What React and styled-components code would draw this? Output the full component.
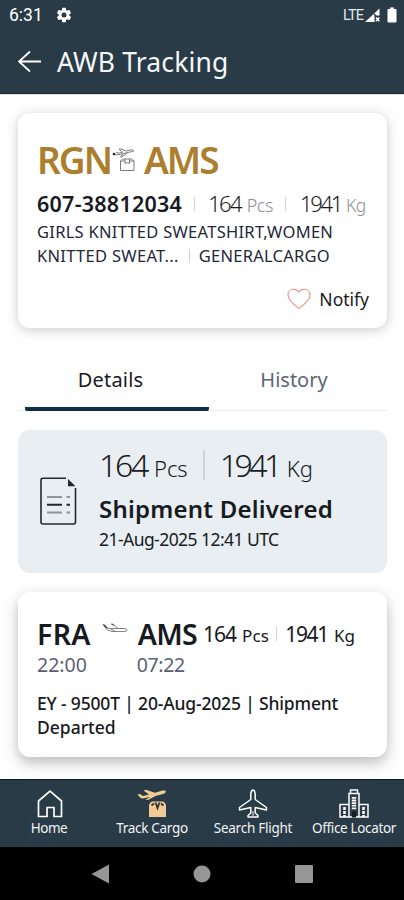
import styled, { createGlobalStyle } from 'styled-components';

const GlobalStyle = createGlobalStyle`
  *, *::before, *::after {
    box-sizing: border-box;
  }

  body {
    margin: 0;
    background: #fff;
    font-family: 'Noto Sans', 'Open Sans', sans-serif;
  }
`;

const Screen = styled.div`
  display: flex;
  flex-direction: column;
  width: 404px;
  height: 900px;
  overflow: hidden;
  background: #fefefe;
`;

const Text = styled.span`
  display: block;
  flex: none;
  white-space: nowrap;
  color: ${({ $color }) => $color || '#171a21'};
  font-size: ${({ $size }) => $size}px;
  font-weight: ${({ $weight }) => $weight || 400};
  letter-spacing: ${({ $track }) => $track || 0}px;
  line-height: inherit;
  margin-left: ${({ $gap }) => $gap || 0}px;
`;

/* Top bars */
const StatusBar = styled.div`
  display: flex;
  align-items: center;
  flex: none;
  height: 30px;
  padding: 0 7px 0 9px;
  background: #283b47;
  font-family: Roboto, sans-serif;
`;

const StatusIcons = styled.div`
  display: flex;
  align-items: center;
  margin-left: auto;
`;

const Header = styled.header`
  display: flex;
  align-items: center;
  flex: none;
  height: 64px;
  padding-left: 18px;
  background: #283b47;
  border-bottom: 1px solid #122b3b;
`;

const Icon = styled.svg`
  display: block;
  flex: none;
  margin-left: ${({ $gap }) => $gap || 0}px;
`;

/* Content */
const Content = styled.main`
  flex: 1;
  min-height: 0;
  padding: 18px 17px 0 18px;
  overflow: hidden;
  border-top: 1px solid #dcdfe1;
`;

const Card = styled.section`
  height: ${({ $height }) => $height}px;
  padding: ${({ $top }) => $top}px 18px 0 19px;
  background: #fff;
  border-radius: 12px;
  box-shadow: ${({ $raised }) =>
    $raised
      ? '0 7px 14px rgba(0, 0, 0, 0.22), 0 0 12px rgba(0, 0, 0, 0.06)'
      : '0 2px 12px rgba(0, 0, 0, 0.2)'};
`;

const Row = styled.div`
  display: flex;
  align-items: ${({ $align }) => $align || 'baseline'};
  height: ${({ $height }) => $height}px;
  line-height: ${({ $height }) => $height}px;
  margin-top: ${({ $top }) => $top || 0}px;
`;

const Divider = styled.span`
  flex: none;
  align-self: center;
  width: ${({ $width }) => $width || 1}px;
  height: ${({ $height }) => $height}px;
  margin-left: ${({ $gap }) => $gap}px;
  background: #d0d2d6;
`;

const NotifyButton = styled.button`
  display: flex;
  align-items: center;
  height: 30px;
  margin: 16px 0 0 auto;
  padding: 0;
  border: 0;
  background: none;
  font-family: inherit;
  line-height: 30px;
`;

/* Tabs */
const Tabs = styled.div`
  display: grid;
  grid-template-columns: 184px 1fr;
  height: 56px;
  margin: 27px 0 19px;
  padding-left: 7px;
  border-bottom: 1px solid #e9ecee;
`;

const Tab = styled.button`
  display: flex;
  justify-content: center;
  height: 56px;
  padding: 0 8px 0 0;
  border: 0;
  background: none;
  font-family: inherit;
  line-height: 50px;
`;

const ActiveTab = styled(Tab)`
  padding-right: 13px;
  background: linear-gradient(#0d2e44, #0d2e44) bottom / 100% 4px no-repeat;
  border-radius: 2px;
`;

const StatusPanel = styled.section`
  display: flex;
  height: 143px;
  margin-bottom: 19px;
  padding: 17px 0 0 22px;
  border-radius: 12px;
  background: #e8eef1;
`;

const StatusText = styled.div`
  margin-left: 22px;
`;

/* Bottom bars */
const BottomNav = styled.nav`
  display: grid;
  grid-template-columns: 98px 107px 96px 103px;
  flex: none;
  height: 68px;
  background: #283b47;
  border-top: 1px solid #0d1a22;
`;

const NavItem = styled.a`
  display: flex;
  flex-direction: column;
  align-items: center;
  padding: 9px 0 0 ${({ $shift }) => $shift || 0}px;
  line-height: 19px;
`;

const SystemBar = styled.div`
  display: flex;
  align-items: center;
  justify-content: space-between;
  flex: none;
  height: 53px;
  padding: 0 90px 0 91px;
  background: #000;
`;

function GearIcon() {
  return (
    <Icon $gap={13} width="16" height="16" viewBox="0 0 16 16">
      <g fill="#fff">
        {[0, 60, 120].map((angle) => (
          <rect
            key={angle}
            x="6"
            y="0.8"
            width="4"
            height="14.4"
            rx="0.8"
            transform={`rotate(${angle} 8 8)`}
          />
        ))}
        <circle cx="8" cy="8" r="5.4" />
      </g>
      <circle cx="8" cy="8" r="2.5" fill="#283b47" />
    </Icon>
  );
}

function SignalIcon() {
  return (
    <Icon $gap={2} width="16" height="15" viewBox="0 0 16 15">
      <path d="M0 14L14.5 0.5V7.5H9.5V14Z" fill="#fff" />
      <path d="M9 6L11 8" stroke="#283b47" strokeWidth="1.4" />
      <path
        d="M11 9.5L14.3 13.2M14.3 9.5L11 13.2"
        stroke="#fff"
        strokeWidth="1.6"
      />
    </Icon>
  );
}

function BatteryIcon() {
  return (
    <Icon $gap={6} width="10" height="16" viewBox="0 0 10 16">
      <path
        d="M3 0.5H7V2H8.5Q9.5 2 9.5 3V14.5Q9.5 15.5 8.5 15.5H1.5Q0.5 15.5 0.5 14.5V3Q0.5 2 1.5 2H3Z"
        fill="#fff"
      />
    </Icon>
  );
}

function BackIcon() {
  return (
    <Icon width="24" height="24" viewBox="0 0 24 24">
      <path
        d="M23 11.5H1M12 1.5L1 11.5L12 21.5"
        fill="none"
        stroke="#fff"
        strokeWidth="1.8"
      />
    </Icon>
  );
}

function CargoFlightIcon() {
  return (
    <Icon $gap={1} width="24" height="26" viewBox="0 0 24 26">
      <g fill="none" stroke="#6b6d70" strokeWidth="0.9">
        <path d="M1.5 5.7L4 6.8L7 6.6L21.5 3.2Q22 1.8 19.5 1.7L14.5 3L8.5 0.8L7 1.2L10.5 4.2L7 5.2L4 4.2" />
        <path d="M11 6L8.5 9L10 8.8L15.5 4.8" />
        <path d="M8.5 13L10.5 11H19.5L22 13V22.5H8.5ZM8.5 13H13M17.5 13H22M13 11V15.5L15.2 14.5L17.5 15.5V11" />
      </g>
      <circle cx="2" cy="6" r="1.3" fill="#222" />
    </Icon>
  );
}

function HeartIcon() {
  return (
    <Icon width="24" height="22" viewBox="0 0 24 22">
      <path
        d="M12 20.5C8 17.5 1 12.5 1 7C1 3.5 3.3 1.2 6.3 1.2C9 1.2 11 2.3 12 4C13 2.3 15 1.2 17.7 1.2C20.7 1.2 23 3.5 23 7C23 12.5 16 17.5 12 20.5Z"
        fill="none"
        stroke="#ef8e86"
        strokeWidth="1.1"
      />
    </Icon>
  );
}

function DocumentIcon() {
  return (
    <Icon width="37" height="48" viewBox="0 0 37 48">
      <path
        d="M26 1.2H3Q1 1.2 1 3.2V45Q1 47 3 47H33.5Q35.5 47 35.5 45V11"
        fill="none"
        stroke="#23282d"
        strokeWidth="1.6"
      />
      <path d="M28 2L35.5 9.3H28Z" fill="#23282d" />
      <path d="M7 20H22M26.5 20H30M7 35.5H22M26.5 35.5H30" stroke="#8d9396" strokeWidth="2" />
      <path d="M7 27.7H22M26.5 27.7H30" stroke="#23282d" strokeWidth="2" />
    </Icon>
  );
}

function PlaneIcon() {
  return (
    <Icon $gap={11} width="26" height="12" viewBox="0 0 26 12">
      <g fill="none" stroke="#777" strokeWidth="0.9">
        <path d="M1 1.5L5 6.8L10 8.5H23Q25 8.2 25 7Q24.5 5.5 22 5.5H8L4.5 4.5Z" />
        <path d="M9 1H11L16 5.5M8 5.5L13.5 8.5" />
      </g>
      <path d="M1 1.5L3 1.8L6 5.5L4 5ZM9 1L11 1.3L12.5 3.5Z" fill="#333" />
    </Icon>
  );
}

function HomeIcon() {
  return (
    <Icon $gap={2} width="28" height="30" viewBox="0 0 28 30">
      <path
        d="M2.5 12L14 2.2L25.5 12V27.5H18V18.5H11V27.5H2.5Z"
        fill="none"
        stroke="#fff"
        strokeWidth="1.7"
      />
    </Icon>
  );
}

function TrackCargoIcon() {
  return (
    <Icon width="30" height="30" viewBox="0 0 30 30">
      <g fill="#f0cb96">
        <path d="M0.5 5.5L3 5L6 7L12 5.5L6.5 1.5L9 0.8L18 3.8L25.5 1.5Q28.5 1 29 2.5Q28.8 4 26 5L18.5 7L11 11H8.5L13 8L6 9.5Q3 9.5 0.5 5.5Z" />
        <path d="M15 12.5H26Q29 14 29 17V28H12V17Q12 14 15 12.5Z" />
      </g>
      <path
        d="M14.5 16.5L17 14.5M24 14.5L26.5 16.5M18.5 13.5L20.5 19L22.5 13.5"
        stroke="#34342f"
        strokeWidth="1.8"
        fill="none"
      />
    </Icon>
  );
}

function SearchFlightIcon() {
  return (
    <Icon width="30" height="30" viewBox="0 0 30 30">
      <path
        d="M15 1Q17 1.5 17.2 5V10.5L28.5 18.5V21L17.2 18.5V24L20 26.5V28H10V26.5L12.8 24V18.5L1.5 21V18.5L12.8 10.5V5Q13 1.5 15 1Z"
        fill="none"
        stroke="#fff"
        strokeWidth="1.5"
        strokeLinejoin="round"
      />
      <path d="M15 22V27" stroke="#fff" />
    </Icon>
  );
}

function OfficeIcon() {
  return (
    <Icon width="30" height="30" viewBox="0 0 30 30">
      <g fill="none" stroke="#fff" strokeWidth="1.5">
        <path d="M10 28V4.5H20V28M11.5 4.5V1H18.5V4.5" />
        <path d="M10 15.5H1V28H29V15.5H20" />
        <path d="M5.5 18V28M24.5 18V28" strokeWidth="2.6" strokeDasharray="3 1" />
        <path d="M15 8V21" strokeWidth="4.5" strokeDasharray="1.8 0.8" />
      </g>
      <path d="M13 22.5H17V28.5H13Z" fill="#101d25" />
    </Icon>
  );
}

const NAV_ITEMS = [
  { label: 'Home', icon: HomeIcon, track: -0.5 },
  { label: 'Track Cargo', icon: TrackCargoIcon, track: -0.3, shift: 1 },
  { label: 'Search Flight', icon: SearchFlightIcon, track: -0.25 },
  { label: 'Office Locator', icon: OfficeIcon, track: -0.35, shift: 3 },
];

function App() {
  return (
    <Screen>
      <GlobalStyle />
      <StatusBar>
        <Text $size={17.5} $color="#fff">6:31</Text>
        <GearIcon />
        <StatusIcons>
          <Text $size={14.5} $color="#e4e7e9" $track={-0.9}>LTE</Text>
          <SignalIcon />
          <BatteryIcon />
        </StatusIcons>
      </StatusBar>

      <Header>
        <BackIcon />
        <Text $size={26.5} $color="#f6f7f8" $track={0.15} $gap={15}>
          AWB Tracking
        </Text>
      </Header>

      <Content>
        <Card $height={215} $top={27}>
          <Row $height={40}>
            <Text $size={37} $weight={600} $color="#ab7f2e" $track={-2}>RGN</Text>
            <Row $height={34} $align="center">
              <Row $height={31} $align="flex-start">
                <CargoFlightIcon />
              </Row>
            </Row>
            <Text $size={37} $weight={600} $color="#ab7f2e" $track={-2} $gap={8}>AMS</Text>
          </Row>

          <Row $height={27} $top={10}>
            <Text $size={21.5} $weight={600} $track={0.25}>607-38812034</Text>
            <Divider $height={14} $gap={12} />
            <Text $size={22} $weight={300} $track={-1.7} $gap={13}>164</Text>
            <Text $size={18} $weight={300} $color="#8c8e93" $track={-0.5} $gap={6}>Pcs</Text>
            <Divider $height={14} $gap={12} />
            <Text $size={22} $weight={300} $track={-2.3} $gap={14}>1941</Text>
            <Text $size={17.5} $weight={300} $color="#8c8e93" $track={-0.5} $gap={5}>Kg</Text>
          </Row>

          <Row $height={24} $top={3}>
            <Text $size={16.5} $color="#24273a" $track={0.27}>
              GIRLS KNITTED SWEATSHIRT,WOMEN
            </Text>
          </Row>
          <Row $height={24}>
            <Text $size={16.5} $color="#24273a" $track={0.3}>KNITTED SWEAT...</Text>
            <Divider $height={14} $gap={10} />
            <Text $size={16.5} $color="#24273a" $track={0.25} $gap={9}>GENERALCARGO</Text>
          </Row>

          <NotifyButton>
            <HeartIcon />
            <Text $size={17.5} $gap={8}>Notify</Text>
          </NotifyButton>
        </Card>

        <Tabs>
          <ActiveTab>
            <Text $size={20} $track={0.2}>Details</Text>
          </ActiveTab>
          <Tab>
            <Text $size={20} $color="#5f6577">History</Text>
          </Tab>
        </Tabs>

        <StatusPanel>
          <Row $height={108} $align="center">
            <DocumentIcon />
          </Row>
          <StatusText>
            <Row $height={36}>
              <Text $size={32} $weight={300} $track={-2.3}>164</Text>
              <Text $size={22} $weight={300} $track={0} $gap={7}>Pcs</Text>
              <Divider $height={30} $width={2} $gap={15} />
              <Text $size={32} $weight={300} $track={-3.5} $gap={15}>1941</Text>
              <Text $size={22} $weight={300} $gap={8}>Kg</Text>
            </Row>
            <Row $height={34} $top={9}>
              <Text $size={24} $weight={600} $track={0.22}>Shipment Delivered</Text>
            </Row>
            <Row $height={24} $top={1}>
              <Text $size={17.5} $track={-0.55}>21-Aug-2025 12:41 UTC</Text>
            </Row>
          </StatusText>
        </StatusPanel>

        <Card $height={165} $top={23} $raised>
          <Row $height={38} $align="center">
            <Text $size={28.5} $weight={600} $track={0.3}>FRA</Text>
            <Row $height={22} $align="flex-start">
              <PlaneIcon />
            </Row>
            <Text $size={28.5} $weight={600} $track={-0.7} $gap={10}>AMS</Text>
            <Row $height={38}>
              <Text $size={21} $track={-1} $gap={6}>164</Text>
              <Text $size={17} $track={0.2} $gap={6}>Pcs</Text>
              <Divider $height={14} $gap={7} />
              <Text $size={21} $track={-1.3} $gap={8}>1941</Text>
              <Text $size={17} $gap={6}>Kg</Text>
            </Row>
          </Row>
          <Row $height={24}>
            <Text $size={19.5} $color="#5b6079">22:00</Text>
            <Text $size={19.5} $color="#5b6079" $track={-0.4} $gap={50}>07:22</Text>
          </Row>
          <Row $height={24} $top={14}>
            <Text $size={17.5} $weight={500} $track={-0.17}>
              EY - 9500T | 20-Aug-2025 | Shipment
            </Text>
          </Row>
          <Row $height={24}>
            <Text $size={17.5} $weight={500}>Departed</Text>
          </Row>
        </Card>
      </Content>

      <BottomNav>
        {NAV_ITEMS.map(({ label, icon: NavIcon, track, shift }) => (
          <NavItem key={label} $shift={shift}>
            <NavIcon />
            <Text $size={13.5} $color="#f2f4f5" $track={track}>{label}</Text>
          </NavItem>
        ))}
      </BottomNav>

      <SystemBar>
        <Icon width="19" height="20" viewBox="0 0 19 20">
          <path d="M0.5 10L18 0.5V19.5Z" fill="#969696" />
        </Icon>
        <Icon width="18" height="18" viewBox="0 0 18 18">
          <circle cx="9" cy="9" r="8.5" fill="#969696" />
        </Icon>
        <Icon width="20" height="20" viewBox="0 0 20 20">
          <rect x="1" y="1" width="18" height="18" rx="1" fill="#969696" />
        </Icon>
      </SystemBar>
    </Screen>
  );
}

export default App;
